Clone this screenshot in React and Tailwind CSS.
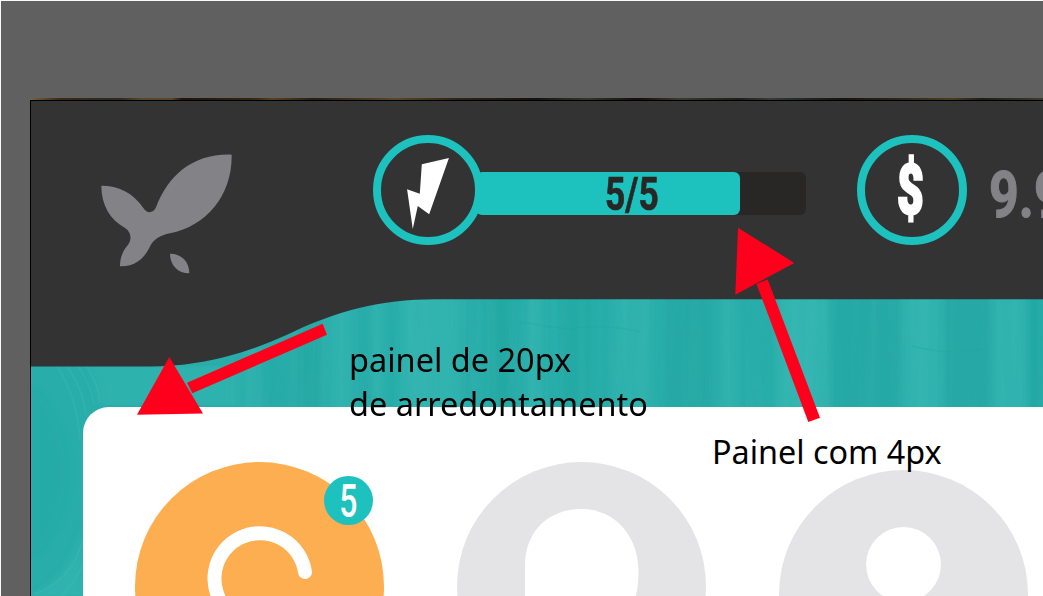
import React from "react";

const SANS = "font-['Noto_Sans','Open_Sans',sans-serif]";
const DIGITS = "font-['Roboto','Noto_Sans',sans-serif]";

const STREAKS = [
  [330, 22, "#3abab5", 0.5], [372, 12, "#3abab5", 0.5], [400, 60, "#3abab5", 0.45], [490, 24, "#1fa5a1", 0.55],
  [528, 14, "#3abab5", 0.45], [560, 34, "#1fa5a1", 0.35], [612, 40, "#3abab5", 0.4], [666, 44, "#1fa5a1", 0.5],
  [722, 14, "#3abab5", 0.35], [778, 52, "#3abab5", 0.55], [828, 74, "#1fa5a1", 0.5], [902, 40, "#3abab5", 0.5],
  [942, 50, "#1fa5a1", 0.45], [992, 34, "#3abab5", 0.5], [1026, 17, "#1fa5a1", 0.6], [245, 14, "#3abab5", 0.4],
  [265, 28, "#1fa5a1", 0.3], [298, 20, "#1fa5a1", 0.5],
];

function Texture() {
  return (
    <svg className="absolute inset-0" width="1012" height="495" viewBox="31 101 1012 495" aria-hidden="true">
      <defs>
        <filter id="soft" x="-50%" y="-10%" width="200%" height="120%">
          <feGaussianBlur stdDeviation="5 1" />
        </filter>
        <filter id="grain" x="0" y="0" width="100%" height="100%">
          <feTurbulence type="fractalNoise" baseFrequency="0.1 0.004" numOctaves="2" seed="4" />
          <feColorMatrix values="0 0 0 0 0.3  0 0 0 0 0.8  0 0 0 0 0.77  0.9 0 0 0 -0.33" />
        </filter>
      </defs>
      <rect x="31" y="101" width="1012" height="495" fill="#28adaa" />
      <g filter="url(#soft)">
        {STREAKS.map(([x, w, c, o]) => (
          <rect key={x} x={x} y="290" width={w} height="125" fill={c} opacity={o} />
        ))}
        <path d="M31 385C70 420 80 500 40 550L31 560Z" fill="#1fa5a1" opacity="0.3" />
        <path d="M90 366H240V405H100Z" fill="#3abab5" opacity="0.4" />
        <path d="M84 520V596H31C60 580 78 560 84 520Z" fill="#3abab5" opacity="0.5" />
      </g>
      <rect x="230" y="290" width="813" height="125" filter="url(#grain)" opacity="0.12" />
      <g fill="none" stroke="#42bdb8" strokeWidth="2" opacity="0.3">
        <path d="M57 366C70 386 78 412 80 440M66 366C80 383 84 400 86 415M78 366C88 380 92 392 94 405M86 366C95 378 98 388 100 402" />
        <path d="M83 540C75 568 58 586 34 594M83 565C76 579 69 588 62 596" />
      </g>
      <path d="M520 322C550 326 560 330 575 328S620 326 640 332M912 346C935 352 955 354 985 349" fill="none" stroke="#1fa5a1" strokeWidth="1.5" opacity="0.35" />
    </svg>
  );
}

function Logo() {
  return (
    <svg className="h-[120px] w-[131px] shrink-0" viewBox="303 222 393 360" fill="#838286" aria-hidden="true">
      <path d="M695 224C697 345 620 438 510 460C480 466 460 478 448 503C430 540 400 560 360 559C360 535 368 513 383 496C396 480 395 456 374 443C330 418 304 375 304 317C355 317 400 338 430 384C440 401 459 401 468 382C505 285 580 220 695 224Z" />
      <path d="M510 521C545 521 568 545 568 580C533 580 510 555 510 521Z" />
    </svg>
  );
}

function Ring({ children }) {
  return (
    <div className="relative z-10 flex size-[110px] shrink-0 items-center justify-center rounded-full border-[8.5px] border-[#1dc1be] bg-[#333333]">
      {children}
    </div>
  );
}

function Energy() {
  return (
    <div className="ml-[141px] flex items-center">
      <Ring>
        <svg className="mt-[6px] h-[71px] w-[42px]" viewBox="142 113 125 212" fill="#ffffff" aria-hidden="true">
          <path d="M186 132L267 113L208 281L174 256L159 325L142 206L180 220Z" />
        </svg>
      </Ring>
      <div className="-ml-[7px] mt-[6px] h-[43px] w-[330px] rounded-md bg-[#282725]">
        <div className="flex h-full w-[264px] items-center justify-center rounded-md bg-[#1dc1be] pt-[2px] pl-[48px]">
          <span className={`${DIGITS} inline-block scale-x-[0.77] text-[46px] leading-none font-bold whitespace-nowrap text-[#282725] [-webkit-text-stroke:0.6px_#282725]`}>5/5</span>
        </div>
      </div>
    </div>
  );
}

function Money() {
  return (
    <div className="ml-[51px] flex items-center">
      <Ring>
        <span className={`${DIGITS} mr-[3px] inline-block scale-x-[0.66] text-[70px] leading-none font-black text-white [-webkit-text-stroke:2.5px_#ffffff]`}>$</span>
      </Ring>
      <span className={`${DIGITS} mt-[10px] ml-[22px] inline-block origin-left scale-x-[0.8] text-[65px] leading-none font-bold whitespace-nowrap text-[#838286] [-webkit-text-stroke:1.2px_#838286]`}>9.99</span>
    </div>
  );
}

function Header() {
  return (
    <header className="relative h-[265px]">
      <svg className="absolute inset-0" width="1012" height="266" viewBox="31 101 1012 266" aria-hidden="true">
        <path d="M31 101H1043V299.300H435C380 299.300 335 312 293 332C250 352 205 366.400 150 366.400H31Z" fill="#333333" />
      </svg>
      <div className="relative flex items-start pl-[70px] pt-[34px]">
        <div className="pt-[19px]">
          <Logo />
        </div>
        <Energy />
        <Money />
      </div>
    </header>
  );
}

function Card() {
  return (
    <main className="relative mt-[41px] ml-[52px] flex h-[189px] items-start gap-[73px] overflow-hidden rounded-tl-[26px] bg-white pt-[55px] pl-[52px]">
      <div className="relative size-[249px] shrink-0 rounded-full bg-[#fdae50]">
        <svg className="absolute top-[64px] left-[71px]" width="106" height="80" viewBox="206 526 106 80" fill="none" stroke="#ffffff" strokeWidth="14" strokeLinecap="round" aria-hidden="true">
          <path d="M305 572A45.5 45.5 0 1 0 227 610" />
        </svg>
        <div className="absolute top-[14px] right-[11px] flex size-[49px] items-center justify-center rounded-full bg-[#1dc1be]">
          <span className={`${DIGITS} inline-block scale-x-[0.68] text-[47px] leading-none font-medium text-white`}>5</span>
        </div>
      </div>
      <div className="size-[249px] shrink-0 rounded-full bg-[#e4e4e6]">
        <svg width="249" height="249" viewBox="457 462 249 249" fill="#ffffff" aria-hidden="true">
          <path d="M525 565C525 531 549 509 581 509C617 509 638.500 538 638.500 572C638.500 584 637 591 635 600H525Z" />
        </svg>
      </div>
      <div className="mt-[8px] flex size-[249px] shrink-0 justify-center rounded-full bg-[#e4e4e6] pt-[57px]">
        <div className="size-[75px] rounded-full bg-white" />
      </div>
    </main>
  );
}

function Annotations() {
  return (
    <div className={`${SANS} pointer-events-none absolute inset-0 text-[33px] leading-[44px] text-black`}>
      <svg className="absolute inset-0" width="1043" height="596" viewBox="0 0 1043 596" fill="#ff001c" aria-hidden="true">
        <path d="M169.300 357L203 413.500L137 414.700Z" />
        <path d="M187 382.700L322.700 323.700L327 334.700L192.300 393.300Z" />
        <path d="M738 227.700L794.300 263L735.300 294.700Z" />
        <path d="M756.500 284L767.700 279.500L820 417.700L808.300 422Z" />
      </svg>
      <p className="absolute top-[338px] left-[349px] origin-left scale-x-[0.984] whitespace-nowrap">painel de 20px</p>
      <p className="absolute top-[382px] left-[349px] origin-left scale-x-[0.983] whitespace-nowrap">de arredontamento</p>
      <p className="absolute top-[430px] left-[712px] origin-left scale-x-[0.98] whitespace-nowrap">Painel com 4px</p>
    </div>
  );
}

export default function App() {
  return (
    <div className="relative flex h-[596px] w-[1043px] flex-col overflow-hidden border-t border-l border-[#fafafa] bg-[#606060]">
      <div className="h-[97px] shrink-0" />
      <div className="ml-[29px] h-[3px] shrink-0 border-b border-black bg-[linear-gradient(90deg,#7a6242_0%,#3a2816_3%,#2c2c22_9%,#5c4529_11%,#5a4528_14%,#1f130a_15%,#35240f_22%,#5a4020_24%,#261d12_28%,#5a4526_36%,#2d2414_42%,#14130e_50%,#33362c_55%,#110d08_60%,#3a3a2c_64%,#1c1e16_70%,#343c34_73%,#14130e_80%,#2a2416_85%,#4a3a20_91%,#1f1c14_94%,#3e3a2a_100%)]" />
      <div className="ml-[29px] h-[495px] shrink-0 border-l border-black">
        <div className="relative h-full w-[1012px]">
          <Texture />
          <Header />
          <Card />
        </div>
      </div>
      <div className="absolute -top-px -left-px h-[596px] w-[1043px]">
        <Annotations />
      </div>
    </div>
  );
}
